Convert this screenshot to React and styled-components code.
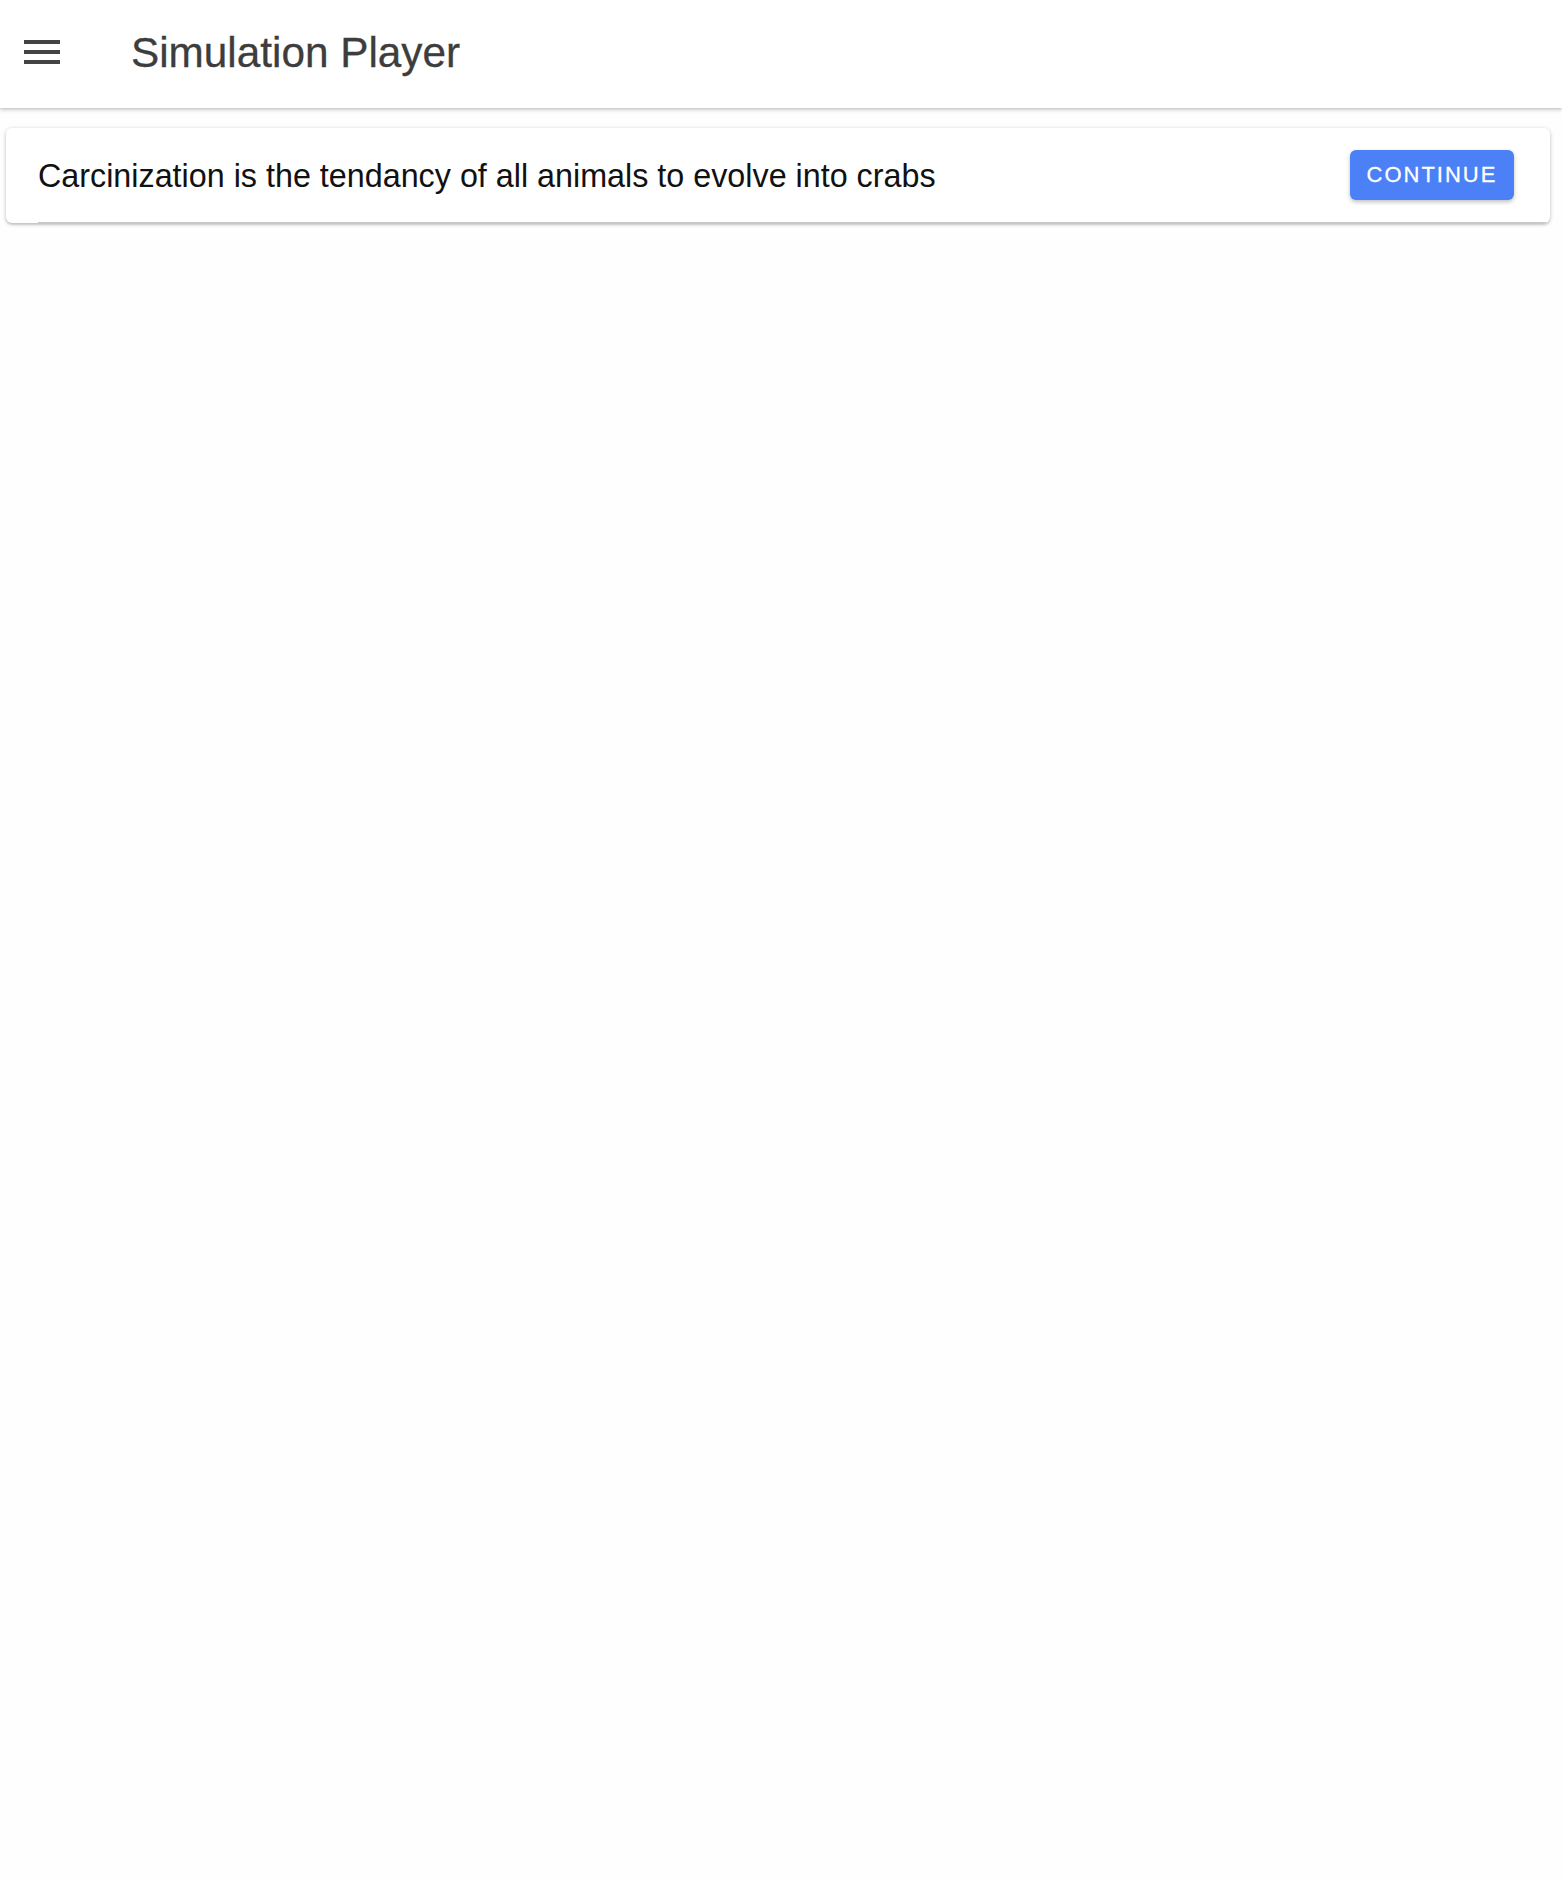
import React from "react";
import styled, { createGlobalStyle } from "styled-components";

const GlobalStyle = createGlobalStyle`
  html, body {
    margin: 0;
    padding: 0;
    background: #fefefe;
    font-family: "Liberation Sans", Arial, sans-serif;
  }
  #root {
    min-height: 1880px;
  }
`;

const App = () => {
  return (
    <>
      <GlobalStyle />
      <Header>
        <MenuBtn aria-label="menu">
          <svg width="36" height="24" viewBox="0 0 36 24">
            <rect x="0" y="0" width="36" height="4" fill="#444" />
            <rect x="0" y="10" width="36" height="4" fill="#444" />
            <rect x="0" y="20" width="36" height="4" fill="#444" />
          </svg>
        </MenuBtn>
        <Title>Simulation Player</Title>
      </Header>
      <Main>
        <Card>
          <Message>
            Carcinization is the tendancy of all animals to evolve into crabs
          </Message>
          <ContinueBtn>Continue</ContinueBtn>
        </Card>
      </Main>
    </>
  );
};

export default App;

//header bar:
const Header = styled.header`
  height: 108px;
  background: #fff;
  display: flex;
  align-items: center;
  padding-left: 24px;
  gap: 71px;
  box-shadow: 0 2px 4px rgba(0, 0, 0, 0.18), 0 1px 2px rgba(0, 0, 0, 0.08);
  position: relative;
  z-index: 1;
`;

const MenuBtn = styled.button`
  border: none;
  background: none;
  padding: 0;
  margin-top: -4px;
  display: flex;
  cursor: pointer;
`;

const Title = styled.h1`
  margin: 0;
  margin-top: -2px;
  font-size: 42.3px;
  font-weight: 400;
  color: #3d3d3d;
  -webkit-text-stroke: 0.3px #3d3d3d;
`;

const Main = styled.main`
  padding: 20px 12px 0 6px;
`;

//card with message:
const Card = styled.div`
  height: 95px;
  background: #fff;
  border-radius: 6px;
  box-shadow: 0 1px 4px rgba(0, 0, 0, 0.22), 0 2px 2px rgba(0, 0, 0, 0.1);
  display: flex;
  align-items: center;
  justify-content: space-between;
  padding: 0 36px 0 32px;
  position: relative;
  overflow: hidden;
  &::after {
    content: "";
    position: absolute;
    left: 32px;
    right: 0;
    bottom: 0;
    height: 1px;
    background: #c8c8c8;
  }
`;

const Message = styled.div`
  font-size: 32.3px;
  color: #111;
  margin-top: 2px;
`;

const ContinueBtn = styled.button`
  width: 164px;
  height: 50px;
  border: none;
  border-radius: 6px;
  background: #4b80f7;
  color: #fff;
  font-family: "Liberation Sans", Arial, sans-serif;
  font-size: 22px;
  letter-spacing: 2px;
  text-transform: uppercase;
  box-shadow: 0 2px 4px rgba(0, 0, 0, 0.25);
  cursor: pointer;
  margin-top: -2px;
  -webkit-text-stroke: 0.3px #fff;
`;
